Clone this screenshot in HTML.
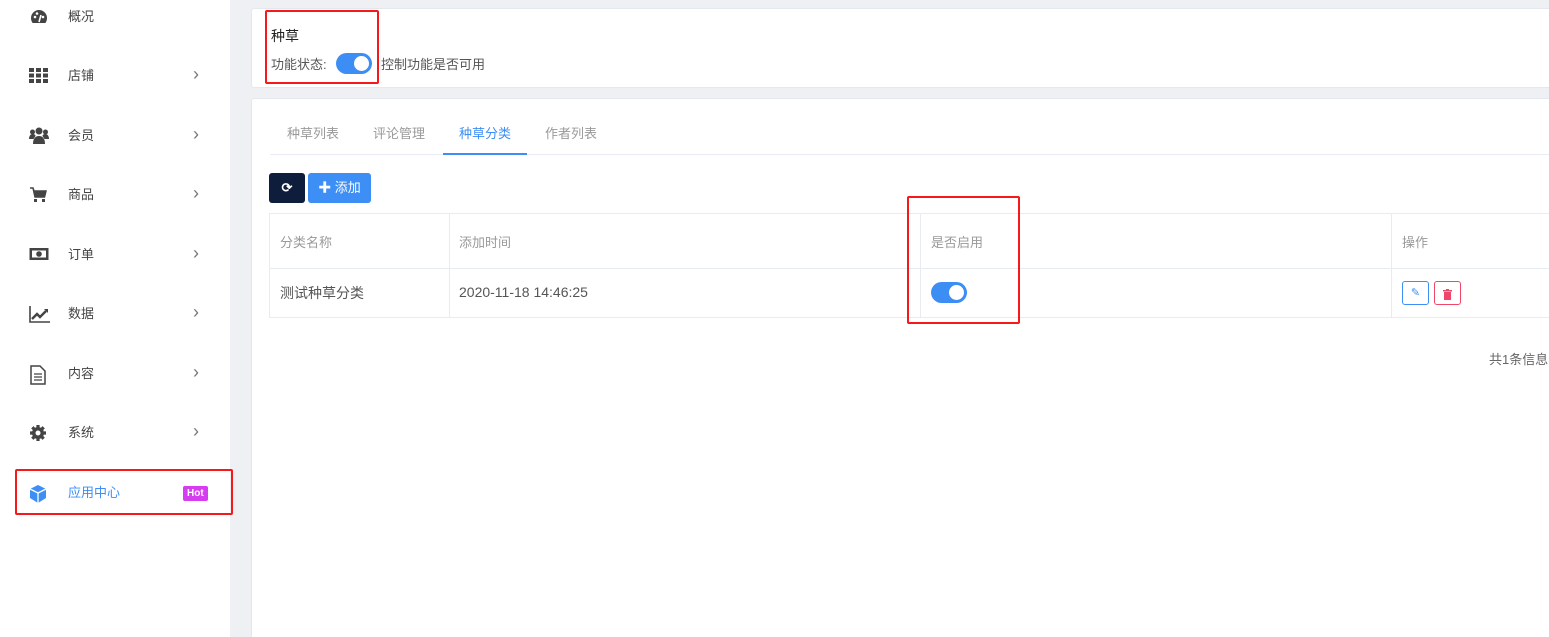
<!DOCTYPE html>
<html><head><meta charset="utf-8"><style>
*{margin:0;padding:0;box-sizing:border-box}
html,body{width:1549px;height:637px;overflow:hidden}
body{background:#eef0f4;font-family:"Liberation Sans","Noto Sans CJK SC",sans-serif;font-size:13px;color:#555;position:relative}
span,div{white-space:nowrap}
.side{position:absolute;left:0;top:0;width:230px;height:637px;background:#fff}
.item{position:absolute;left:0;width:230px;height:20px}
.item svg{position:absolute;left:29px;top:1px}
.item .t{position:absolute;left:68px;top:0;color:#444;line-height:20px}
.item .ar{position:absolute;left:193px;top:-2px;color:#777;font-size:18px;line-height:20px}
.card{position:absolute;background:#fff;border:1px solid #e4e7ed;border-radius:3px}
.red{position:absolute;border:2px solid #f5191a;border-radius:2px}
.sw{display:inline-block;width:36px;height:21px;border-radius:11px;background:#3c8ef5;position:relative;vertical-align:middle}
.sw:after{content:"";position:absolute;right:3px;top:3px;width:15px;height:15px;border-radius:50%;background:#fff}
.tab{position:absolute;top:123px;color:#999}
.cell{position:absolute;color:#999}
.hl{position:absolute;height:1px;background:#e8ebf1}
.vl{position:absolute;width:1px;background:#e8ebf1}
</style></head><body>
<div class="side">
 <div class="item" style="top:7px"><svg width="20" height="18" viewBox="0 0 20 18"><path d="M10 2a8 8 0 0 0-8 8c0 2 .6 3.6 1.6 5h12.8c1-1.4 1.6-3 1.6-5a8 8 0 0 0-8-8z" fill="#444"/><circle cx="6" cy="9" r="1.3" fill="#fff"/><circle cx="14" cy="9" r="1.3" fill="#fff"/><circle cx="8" cy="5.5" r="1.3" fill="#fff"/><path d="M10 14l2-7" stroke="#fff" stroke-width="1.6"/></svg><span class="t">概况</span></div>
 <div class="item" style="top:66px"><svg width="20" height="16" viewBox="0 0 20 16"><g fill="#444"><rect x="0" y="1" width="5" height="4"/><rect x="7" y="1" width="5" height="4"/><rect x="14" y="1" width="5" height="4"/><rect x="0" y="6.5" width="5" height="4"/><rect x="7" y="6.5" width="5" height="4"/><rect x="14" y="6.5" width="5" height="4"/><rect x="0" y="12" width="5" height="4"/><rect x="7" y="12" width="5" height="4"/><rect x="14" y="12" width="5" height="4"/></g></svg><span class="t">店铺</span><span class="ar">›</span></div>
 <div class="item" style="top:126px"><svg width="20" height="18" viewBox="0 0 20 18"><g fill="#444"><circle cx="10" cy="4" r="3.5"/><circle cx="3.5" cy="5" r="2.5"/><circle cx="16.5" cy="5" r="2.5"/><path d="M4 17c0-5 2-8 6-8s6 3 6 8z"/><path d="M0 12c0-3 1.5-5 3.5-5s3 1 3 2l-2 3z"/><path d="M20 12c0-3-1.5-5-3.5-5s-3 1-3 2l2 3z"/></g></svg><span class="t">会员</span><span class="ar">›</span></div>
 <div class="item" style="top:185px"><svg width="20" height="18" viewBox="0 0 20 18"><path d="M1 2h3l1 3h12l-1.5 6H6l-2-9" fill="#444" stroke="#444" stroke-width="1.5"/><rect x="5" y="13" width="3" height="3" fill="#444"/><rect x="13" y="13" width="3" height="3" fill="#444"/></svg><span class="t">商品</span><span class="ar">›</span></div>
 <div class="item" style="top:245px"><svg width="20" height="16" viewBox="0 0 20 16"><rect x="0.5" y="2" width="19" height="12" fill="#444"/><rect x="3" y="4.5" width="14" height="7" fill="#fff"/><circle cx="10" cy="8" r="2.8" fill="#444"/></svg><span class="t">订单</span><span class="ar">›</span></div>
 <div class="item" style="top:304px"><svg width="22" height="18" viewBox="0 0 22 18"><path d="M1 1v16h20" stroke="#444" stroke-width="1.6" fill="none"/><path d="M3 14l5-5 3 3 6-6" stroke="#444" stroke-width="2.4" fill="none"/><path d="M15 4h4v4z" fill="#444"/></svg><span class="t">数据</span><span class="ar">›</span></div>
 <div class="item" style="top:364px"><svg width="18" height="20" viewBox="0 0 18 20"><path d="M2 1h9l5 5v13H2z" fill="none" stroke="#444" stroke-width="1.5"/><path d="M5 9h8M5 12h8M5 15h8" stroke="#444" stroke-width="1.3"/></svg><span class="t">内容</span><span class="ar">›</span></div>
 <div class="item" style="top:423px"><svg width="18" height="18" viewBox="0 0 18 18"><circle cx="9" cy="9" r="6" fill="#444"/><g stroke="#444" stroke-width="3.2"><path d="M9 1v16M1 9h16M3.3 3.3l11.4 11.4M14.7 3.3L3.3 14.7"/></g><circle cx="9" cy="9" r="2.5" fill="#fff"/></svg><span class="t">系统</span><span class="ar">›</span></div>
 <div class="item" style="top:483px"><svg width="18" height="20" viewBox="0 0 18 20"><path d="M9 1l8 4v9l-8 5-8-5V5z" fill="#3d8ef5"/><path d="M1 5l8 4 8-4M9 9v10" stroke="#fff" stroke-width="1.3" fill="none"/></svg><span class="t" style="color:#3d8ef5">应用中心</span><span style="position:absolute;left:183px;top:3px;background:#d63cf0;color:#fff;font-size:10px;font-weight:bold;padding:1px 4px;border-radius:2px;line-height:13px">Hot</span></div>
</div>
<div class="red" style="left:15px;top:469px;width:218px;height:46px"></div>

<div class="card" style="left:251px;top:8px;width:1310px;height:80px"></div>
<div style="position:absolute;left:271px;top:26px;font-size:14px;color:#222">种草</div>
<div style="position:absolute;left:271px;top:54px;color:#555">功能状态:</div>
<span class="sw" style="position:absolute;left:336px;top:53px"></span>
<div style="position:absolute;left:381px;top:54px;color:#555">控制功能是否可用</div>
<div class="red" style="left:265px;top:10px;width:114px;height:74px"></div>

<div class="card" style="left:251px;top:98px;width:1310px;height:545px"></div>
<span class="tab" style="left:287px">种草列表</span>
<span class="tab" style="left:373px">评论管理</span>
<span class="tab" style="left:459px;color:#3d8ef5">种草分类</span>
<span class="tab" style="left:545px">作者列表</span>
<div class="hl" style="left:270px;top:154px;width:1290px"></div>
<div style="position:absolute;left:443px;top:153px;width:84px;height:2px;background:#3d8ef5"></div>

<div style="position:absolute;left:269px;top:173px;width:36px;height:30px;background:#0e1d3b;border-radius:3px;color:#fff;text-align:center;line-height:30px;font-weight:bold">⟳</div>
<div style="position:absolute;left:308px;top:173px;width:63px;height:30px;background:#3d8ef5;border-radius:3px;color:#fff;text-align:center;line-height:30px">✚ 添加</div>

<div class="hl" style="left:269px;top:213px;width:1290px"></div>
<div class="hl" style="left:269px;top:268px;width:1290px"></div>
<div class="hl" style="left:269px;top:317px;width:1290px"></div>
<div class="vl" style="left:269px;top:213px;height:105px"></div>
<div class="vl" style="left:449px;top:213px;height:105px"></div>
<div class="vl" style="left:920px;top:213px;height:105px"></div>
<div class="vl" style="left:1391px;top:213px;height:105px"></div>
<span class="cell" style="left:280px;top:232px">分类名称</span>
<span class="cell" style="left:459px;top:232px">添加时间</span>
<span class="cell" style="left:931px;top:232px">是否启用</span>
<span class="cell" style="left:1402px;top:232px">操作</span>
<span class="cell" style="left:280px;top:283px;color:#555;font-size:14px">测试种草分类</span>
<span class="cell" style="left:459px;top:284px;color:#555;font-size:14px">2020-11-18 14:46:25</span>
<span class="sw" style="position:absolute;left:931px;top:282px"></span>
<div style="position:absolute;left:1402px;top:281px;width:27px;height:24px;border:1px solid #3d8ef5;border-radius:3px;color:#3d8ef5;text-align:center;line-height:22px;font-size:11px">✎</div>
<div style="position:absolute;left:1434px;top:281px;width:27px;height:24px;border:1px solid #f0466a;border-radius:3px;text-align:center;padding-top:6px"><svg width="9" height="11" viewBox="0 0 9 11"><rect x="0" y="1" width="9" height="1.5" fill="#f0466a"/><rect x="3" y="0" width="3" height="1.5" fill="#f0466a"/><rect x="1" y="3" width="7" height="8" fill="#f0466a"/></svg></div>
<div class="red" style="left:907px;top:196px;width:113px;height:128px"></div>
<span class="cell" style="left:1489px;top:349px;color:#666">共1条信息</span>
</body></html>
